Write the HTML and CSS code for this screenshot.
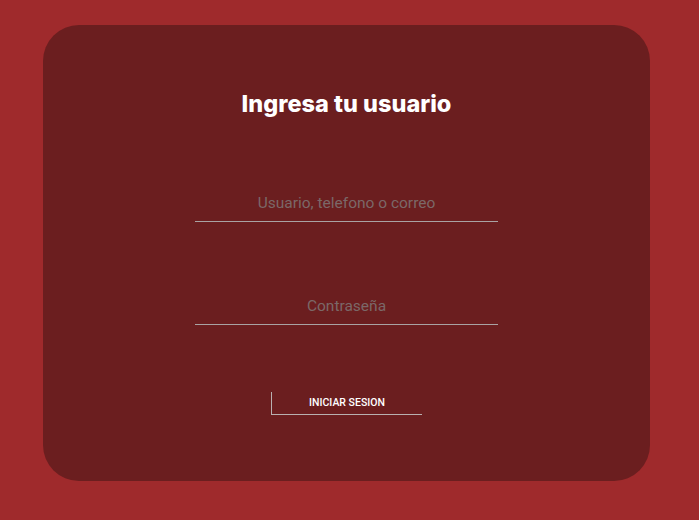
FILE: index.html
```html
<!DOCTYPE html>
<html lang="es">
<head>
<meta charset="utf-8">
<title>Ingresa tu usuario</title>
<link rel="stylesheet" href="styles.css">
</head>
<body>
<main class="page">
  <form class="card">
    <h1 class="title">Ingresa tu usuario</h1>
    <input class="field field-user" type="text" placeholder="Usuario, telefono o correo">
    <input class="field field-pass" type="password" placeholder="Contraseña">
    <button class="submit" type="button">INICIAR SESION</button>
  </form>
</main>
</body>
</html>
```
FILE: styles.css
```css
* { box-sizing: border-box; }
html, body { margin: 0; height: 100%; }
body {
  background: #9f2a2c;
  font-family: Roboto, "Liberation Sans", sans-serif;
}
.page {
  padding: 25px 49px 39px 43px;
}
.card {
  height: 456px;
  background: #6b1e1f;
  border-radius: 36px;
  display: flex;
  flex-direction: column;
  align-items: center;
  padding-top: 64px;
  margin: 0;
}
.title {
  margin: 0;
  color: #ffffff;
  font-family: Inter, Roboto, sans-serif;
  font-size: 23.5px;
  font-weight: 800;
  line-height: 29px;
}
.field {
  width: 303px;
  height: 30px;
  background: transparent;
  border: 0;
  border-bottom: 1px solid #a9a3a3;
  color: #ffffff;
  text-align: center;
  font-family: Roboto, "Liberation Sans", sans-serif;
  font-size: 15.5px;
  outline: none;
  padding: 0 0 8px;
}
.field::placeholder { color: #7b6868; }
.field-user { margin-top: 74px; }
.field-pass { margin-top: 73px; }
.submit {
  margin-top: 67px;
  width: 151px;
  height: 23px;
  background: transparent;
  border: 0;
  border-left: 1px solid #b9b0b0;
  border-bottom: 1px solid #b9b0b0;
  color: #ffffff;
  font-family: Roboto, "Liberation Sans", sans-serif;
  font-size: 10.5px;
  font-weight: 500;
  padding: 0 0 2px;
}
```
